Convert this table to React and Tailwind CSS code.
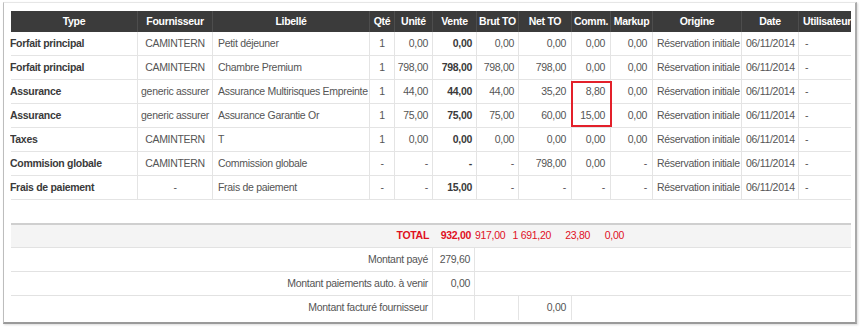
const cols = "grid grid-cols-[127px_75px_157px_25px_38px_44px_42px_53px_39px_42px_89px_57px_52px]";

const headers = ["Type", "Fournisseur", "Libellé", "Qté", "Unité", "Vente", "Brut TO", "Net TO", "Comm.", "Markup", "Origine", "Date", "Utilisateur"];

const rows = [
  ["Forfait principal", "CAMINTERN", "Petit déjeuner", "1", "0,00", "0,00", "0,00", "0,00", "0,00", "0,00"],
  ["Forfait principal", "CAMINTERN", "Chambre Premium", "1", "798,00", "798,00", "798,00", "798,00", "0,00", "0,00"],
  ["Assurance", "generic assurer", "Assurance Multirisques Empreinte", "1", "44,00", "44,00", "44,00", "35,20", "8,80", "0,00"],
  ["Assurance", "generic assurer", "Assurance Garantie Or", "1", "75,00", "75,00", "75,00", "60,00", "15,00", "0,00"],
  ["Taxes", "CAMINTERN", "T", "1", "0,00", "0,00", "0,00", "0,00", "0,00", "0,00"],
  ["Commision globale", "CAMINTERN", "Commission globale", "-", "-", "-", "-", "798,00", "0,00", "-"],
  ["Frais de paiement", "-", "Frais de paiement", "-", "-", "15,00", "-", "-", "-", "-"],
];

const cell = "h-full flex items-center border-r border-[#e4e4e4] whitespace-nowrap overflow-hidden";

export default function App() {
  return (
    <div className="w-[861px] h-[328px] bg-white overflow-hidden pt-[2px] pl-[3px] text-[10.5px] tracking-[-0.3px] text-[#555]" style={{ fontFamily: '"Liberation Sans", Arial, sans-serif' }}>
      <div className="relative w-[854px] h-[322px] border-t border-t-[#e6e6e6] border-l border-l-[#bdbdbd] border-r-2 border-r-[#aaa] border-b-2 border-b-[#9a9a9a] overflow-hidden pt-[8px] pl-[7px] shadow-[1px_1px_2px_rgba(0,0,0,0.15)]">
        <div className="w-[840px]">
          {/* header */}
          <div className={`${cols} h-[21px] bg-[#3b3b3b] text-white font-bold`}>
            {headers.map((h, i) => (
              <div key={h} className={`h-full flex items-center whitespace-nowrap overflow-hidden ${i < 12 ? "justify-center border-r border-[#4d4d4d]" : "pl-[4px]"}`}>{h}</div>
            ))}
          </div>

          {/* lignes */}
          {rows.map((r, idx) => (
            <div key={idx} className={`${cols} h-[24px] border-b border-[#e4e4e4] bg-white`}>
              <div className={`${cell} font-bold text-[#3a3a3a] -ml-[1px]`}>{r[0]}</div>
              <div className={`${cell} justify-center`}>{r[1]}</div>
              <div className={`${cell} pl-[5px]`}>{r[2]}</div>
              <div className={`${cell} justify-center`}>{r[3]}</div>
              <div className={`${cell} justify-end pr-[4px]`}>{r[4]}</div>
              <div className={`${cell} justify-end pr-[4px] font-bold text-[#3a3a3a]`}>{r[5]}</div>
              <div className={`${cell} justify-end pr-[4px]`}>{r[6]}</div>
              <div className={`${cell} justify-end pr-[5px]`}>{r[7]}</div>
              <div className={`${cell} justify-end pr-[5px]`}>{r[8]}</div>
              <div className={`${cell} justify-end pr-[5px]`}>{r[9]}</div>
              <div className={`${cell} pl-[4px]`}>Réservation initiale</div>
              <div className={`${cell} pl-[4px]`}>06/11/2014</div>
              <div className="h-full flex items-center pl-[6px]">-</div>
            </div>
          ))}

          {/* totaux */}
          <div className="mt-[23px] border-t-2 border-[#cfcfcf]">
            <div className="flex h-[23px] items-center bg-[#f4f4f4] border-b border-[#e2e2e2] text-[#e0101f]">
              <div className="w-[422px] text-right pr-[4px] font-bold">TOTAL</div>
              <div className="w-[42px] text-right pr-[4px] font-bold">932,00</div>
              <div className="w-[32px] text-right pr-[2px]">917,00</div>
              <div className="w-[46px] text-right pr-[2px]">1 691,20</div>
              <div className="w-[39px] text-right pr-[2px]">23,80</div>
              <div className="w-[34px] text-right pr-[2px]">0,00</div>
            </div>
            <div className="grid grid-cols-[422px_42px_1fr] h-[24px] border-b border-[#e2e2e2]">
              <div className="flex items-center justify-end pr-[4px] border-r border-[#e4e4e4]">Montant payé</div>
              <div className="flex items-center justify-end pr-[4px] border-r border-[#e4e4e4]">279,60</div>
              <div />
            </div>
            <div className="grid grid-cols-[422px_42px_1fr] h-[24px] border-b border-[#e2e2e2]">
              <div className="flex items-center justify-end pr-[4px] border-r border-[#e4e4e4]">Montant paiements auto. à venir</div>
              <div className="flex items-center justify-end pr-[4px] border-r border-[#e4e4e4]">0,00</div>
              <div />
            </div>
            <div className="grid grid-cols-[422px_42px_44px_53px_1fr] h-[24px]">
              <div className="flex items-center justify-end pr-[4px] border-r border-[#e4e4e4]">Montant facturé fournisseur</div>
              <div className="border-r border-[#e4e4e4]" />
              <div className="border-r border-[#e4e4e4]" />
              <div className="flex items-center justify-end pr-[5px] border-r border-[#e4e4e4]">0,00</div>
              <div />
            </div>
          </div>
        </div>

        {/* encadré rouge sur Comm. */}
        <div className="absolute left-[567px] top-[78px] w-[41px] h-[46px] border-2 border-[#e3202a]" />
      </div>
    </div>
  );
}
